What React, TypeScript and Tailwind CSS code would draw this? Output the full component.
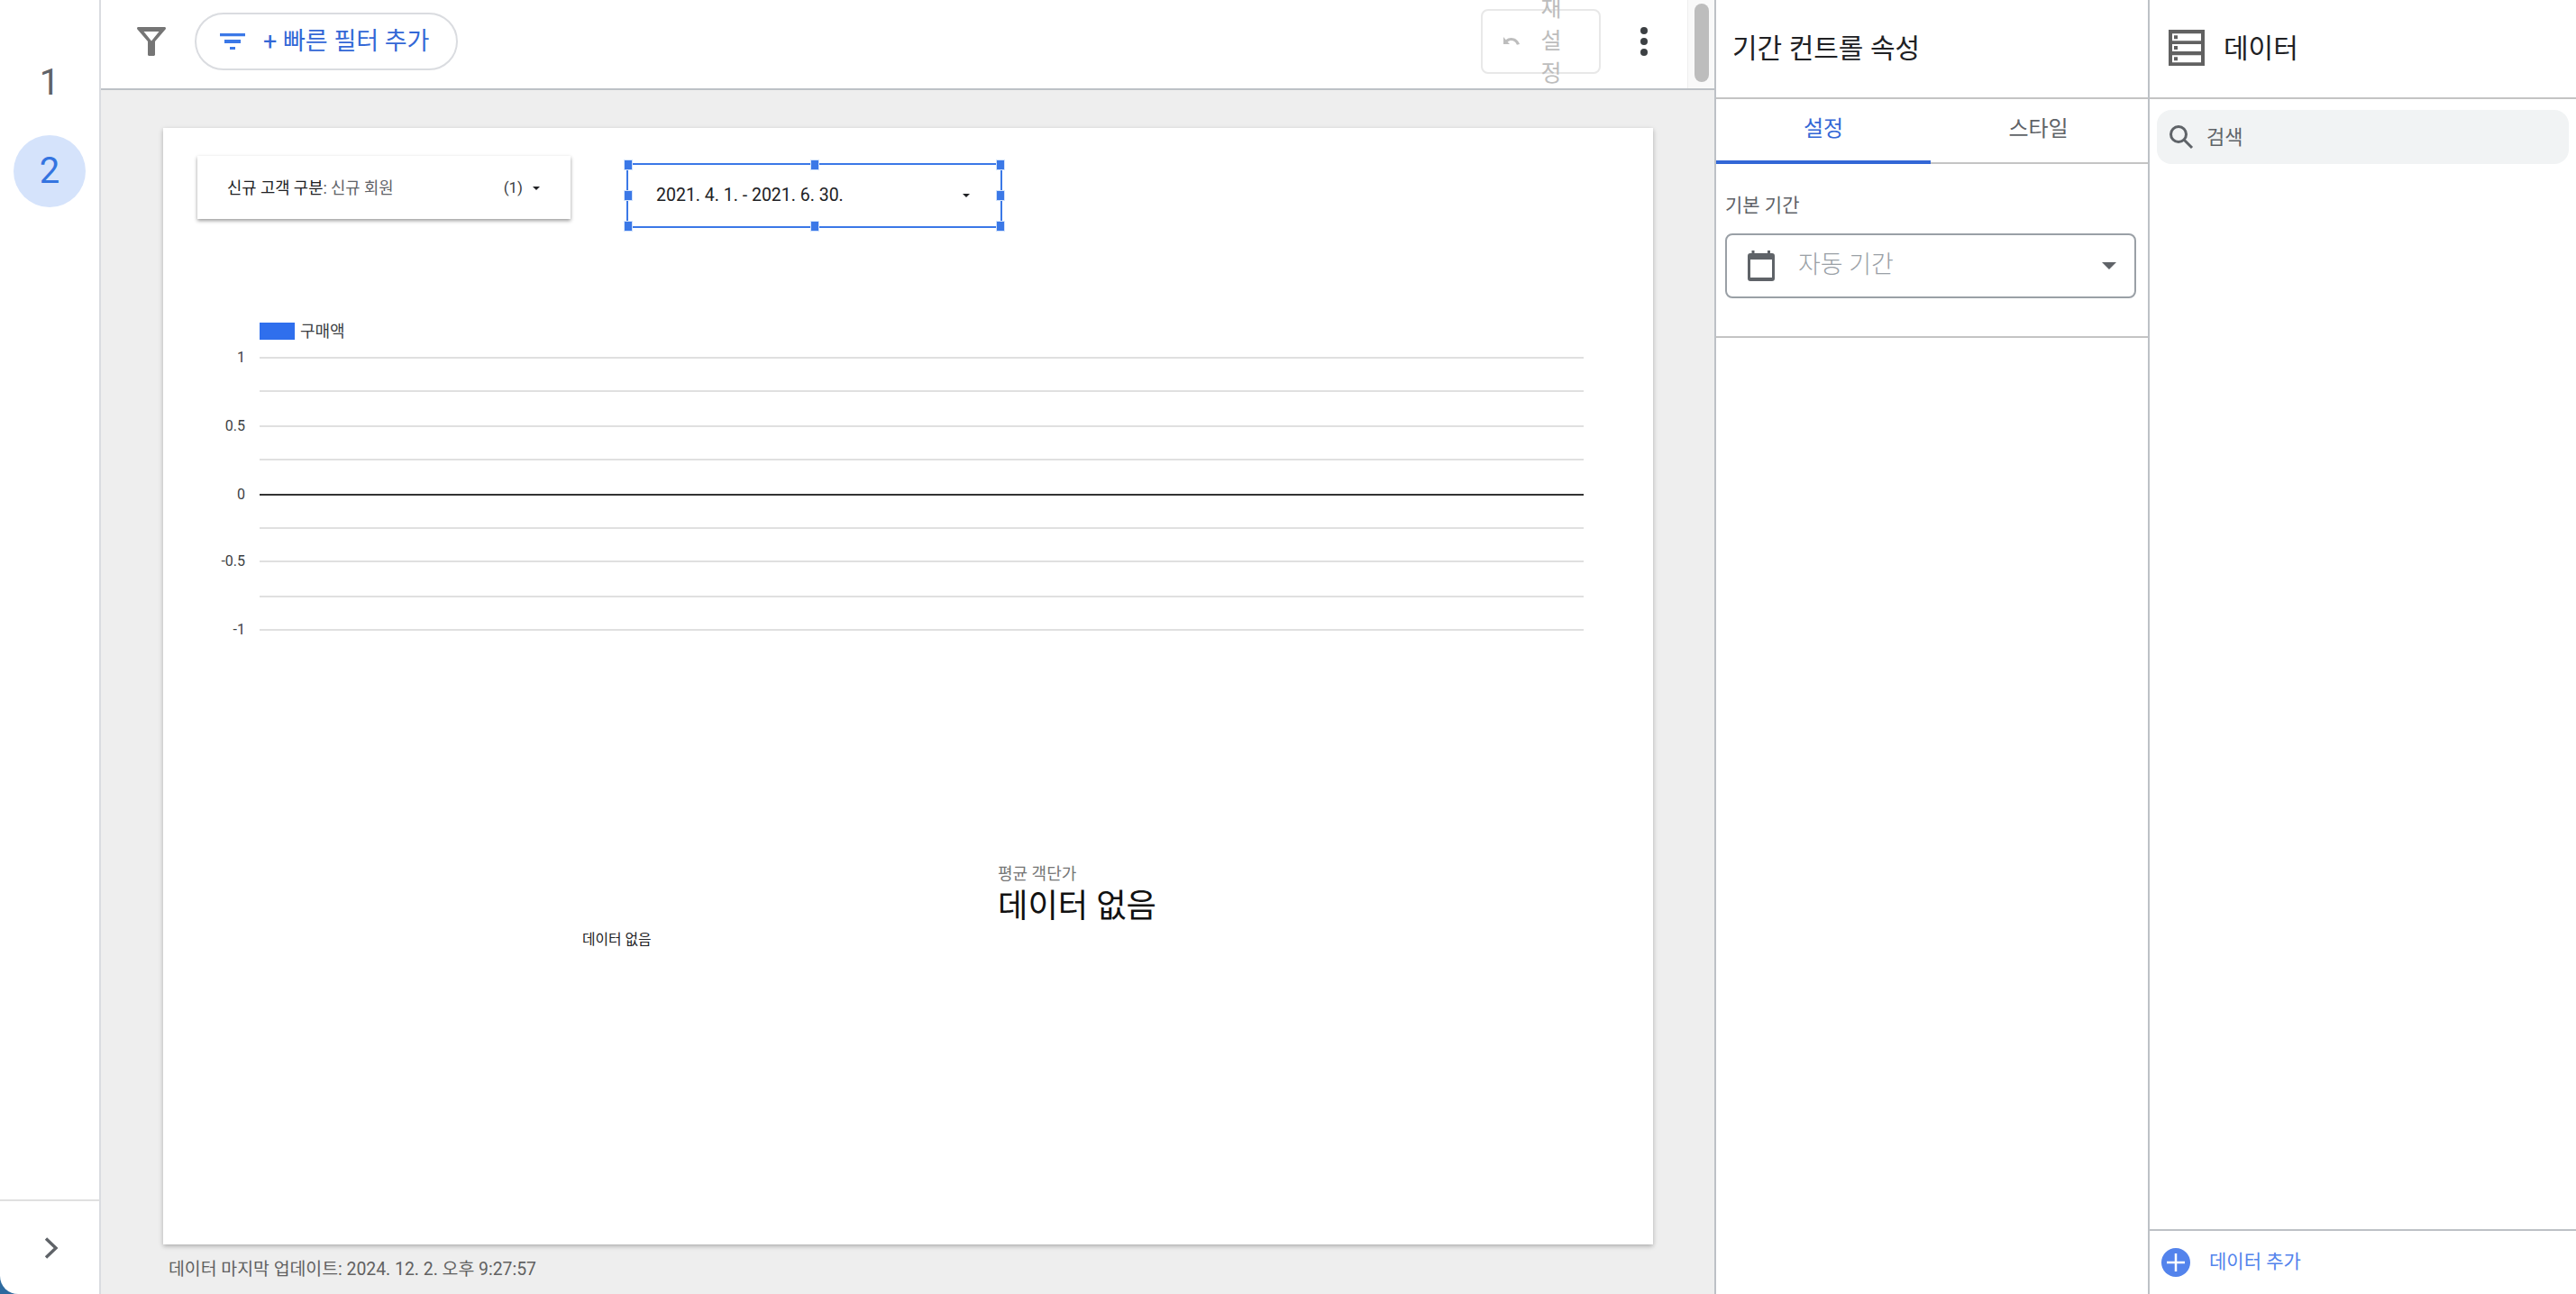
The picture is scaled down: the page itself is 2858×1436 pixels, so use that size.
import React from 'react';

const font = 'font-["Roboto","Noto_Sans_CJK_KR",sans-serif]';
const kr = { fontFamily: 'Roboto, "Noto Sans CJK KR", sans-serif' };

const gridLines = [
  { top: 254, label: '1' },
  { top: 291 },
  { top: 330, label: '0.5' },
  { top: 367 },
  { top: 406, label: '0', dark: true },
  { top: 443 },
  { top: 480, label: '-0.5' },
  { top: 519 },
  { top: 556, label: '-1' },
];

const handles = [
  'left-[-5px] top-[-6px]',
  'left-1/2 -translate-x-1/2 top-[-6px]',
  'right-[-5px] top-[-6px]',
  'left-[-5px] top-1/2 -translate-y-1/2',
  'right-[-5px] top-1/2 -translate-y-1/2',
  'left-[-5px] bottom-[-6px]',
  'left-1/2 -translate-x-1/2 bottom-[-6px]',
  'right-[-5px] bottom-[-6px]',
];

const Caret = ({ className }: { className: string }) => (
  <svg viewBox="0 0 10 5" className={className} fill="currentColor">
    <path d="M0 0h10L5 5z" />
  </svg>
);

const ReportCanvas = () => (
  <div className="relative ml-[69px] mt-[42px] h-[1239px] w-[1653px] bg-white shadow-[0_2px_5px_rgba(0,0,0,0.28)]">
    {/* filter control */}
    <div className="absolute left-[38px] top-[31px] flex h-[70px] w-[414px] items-center justify-between bg-white pl-[33px] pr-[34px] pt-[2px] shadow-[0_2px_4px_rgba(0,0,0,0.4)]">
      <span className="text-[17.7px] text-[#202124]">
        신규 고객 구분<span className="text-[#5f6368]">: 신규 회원</span>
      </span>
      <span className="flex items-center gap-[11px] text-[17px] text-[#3c4043]">
        (1)
        <Caret className="h-[4px] w-[8px] text-[#202124]" />
      </span>
    </div>

    {/* date control, selected */}
    <div className="absolute left-[514px] top-[39px] flex h-[72px] w-[417px] items-center justify-between border-2 border-[#3b78e7] pl-[31px] pr-[34px]">
      <span className="text-[19.5px] text-[#202124]">2021. 4. 1. - 2021. 6. 30.</span>
      <Caret className="h-[4px] w-[8px] text-[#202124]" />
      {handles.map((pos) => (
        <span key={pos} className={`absolute h-[12px] w-[10px] border border-[#d2e3fc] bg-[#3b78e7] ${pos}`} />
      ))}
    </div>

    {/* legend */}
    <div className="absolute left-[107px] top-[216px] flex items-center gap-[6px]">
      <span className="h-[19px] w-[39px] bg-[#2f6fed]" />
      <span className="text-[18px] leading-[19px] text-[#3c4043]">구매액</span>
    </div>

    {/* chart grid */}
    {gridLines.map((line) => (
      <div key={line.top} className="absolute left-[50px] w-[1526px]" style={{ top: line.top }}>
        {line.label && (
          <span className="absolute right-[1485px] top-[-11px] text-[16px] leading-[24px] text-[#3c4043]">{line.label}</span>
        )}
        <div className={`ml-[57px] ${line.dark ? 'h-[2px] bg-[#333333]' : 'h-[2px] bg-[#e0e0e0]'}`} />
      </div>
    ))}

    {/* scorecard */}
    <div className="absolute left-[926px] top-[815px] text-[18px] leading-[26px] text-[#757575]">평균 객단가</div>
    <div className="absolute left-[926px] top-[838px] text-[36.3px] leading-[52px] text-[#111111]">데이터 없음</div>
    <div className="absolute left-[465px] top-[889px] text-[15.8px] leading-[24px] text-[#202124]">데이터 없음</div>
  </div>
);

export default function App() {
  return (
    <div className="h-screen w-screen overflow-hidden bg-[#2d6a9f]" style={kr}>
      <div className={`flex h-full w-full overflow-hidden rounded-bl-[20px] bg-white ${font}`}>
        {/* page rail */}
        <aside className="flex w-[112px] shrink-0 flex-col border-r-2 border-[#dadce0]">
          <div className="flex flex-1 flex-col items-center gap-[18px] pt-[52px]">
            <div className="flex h-[80px] w-[80px] items-center justify-center text-[40px] text-[#5f6368]">1</div>
            <div className="flex h-[80px] w-[80px] items-center justify-center rounded-full bg-[#d5e3fb] text-[40px] text-[#3474e0]">2</div>
          </div>
          <div className="flex h-[105px] items-center justify-center border-t-2 border-[#e0e0e0] pl-[3px]">
            <svg viewBox="0 0 16 24" className="h-[24px] w-[16px]" fill="none" stroke="#5f6368" strokeWidth="3.4">
              <path d="M2 1.5L13 12 2 22.5" />
            </svg>
          </div>
        </aside>

        {/* main area */}
        <main className="flex min-w-0 flex-1 flex-col">
          <header className="flex h-[100px] shrink-0 border-b-2 border-[#bdc1c6]">
            <div className="flex min-w-0 flex-1 items-center pb-[6px] pl-[40px]">
              <svg viewBox="0 0 32 32" className="h-[32px] w-[32px]" fill="#757575">
                <path fillRule="evenodd" d="M1.500 0h29c1.300 0 1.900 1.400 1.100 2.400L20 16v14.500c0 .8-.7 1.500-1.500 1.500h-5c-.8 0-1.500-.7-1.500-1.500V16L.4 2.400C-.4 1.400.2 0 1.500 0zM7.500 5l8.500 10.500L24.500 5z" />
              </svg>
              <button className="ml-[32px] flex h-[64px] w-[292px] items-center rounded-full border-2 border-[#dadce0] pl-[26px] text-[27px] text-[#3367d6]">
                <svg viewBox="0 0 28 18" className="h-[18px] w-[28px]" fill="#3b78e7">
                  <path d="M0 0h28v3.300H0zM5 7h18v4H5zM11 15h6v3h-6z" />
                </svg>
                <span className="ml-[20px] whitespace-nowrap">+ 빠른 필터 추가</span>
              </button>
              <button className="ml-auto flex h-[72px] w-[133px] items-center rounded-[8px] border-2 border-[#e8e8e8] pl-[23px] text-[#bdbdbd]">
                <svg viewBox="0 0 18 10" className="h-[10px] w-[18px] shrink-0" fill="#bdbdbd">
                  <path d="M0 0v8h7L4.600 5.600C5.700 4.700 7 4 8.600 4c2.900 0 5.300 1.700 6.300 4.800L18 8C16.600 3.800 13 1 8.600 1 6.400 1 4.400 1.900 2.800 3.200z" />
                </svg>
                <span className="ml-[22px] w-[26px] text-[25px] leading-[36px]">재 설 정</span>
              </button>
              <div className="ml-[44px] mr-[44px] flex flex-col gap-[4px]">
                <span className="h-[8px] w-[8px] rounded-full bg-[#3c4043]" />
                <span className="h-[8px] w-[8px] rounded-full bg-[#3c4043]" />
                <span className="h-[8px] w-[8px] rounded-full bg-[#3c4043]" />
              </div>
            </div>
            <div className="w-[30px] shrink-0 border-l border-[#eeeeee] bg-[#f9f9f9] px-[7px] pt-[4px]">
              <div className="h-[87px] w-[16px] rounded-full bg-[#bdbdbd]" />
            </div>
          </header>

          <div className="flex-1 overflow-hidden bg-[#eeeeee]">
            <ReportCanvas />
            <p className="ml-[75px] mt-[14px] text-[19.4px] leading-[28px] text-[#616161]">데이터 마지막 업데이트: 2024. 12. 2. 오후 9:27:57</p>
          </div>
        </main>

        {/* properties panel */}
        <section className="flex w-[481px] shrink-0 flex-col border-l-2 border-[#bdc1c6]">
          <div className="flex h-[110px] shrink-0 items-center border-b-2 border-[#c4c4c4] pb-[2px] pl-[18px] text-[30px] text-[#202124]">기간 컨트롤 속성</div>
          <div className="flex h-[72px] shrink-0 border-b-2 border-[#c4c4c4] text-[24px]">
            <div className="relative flex w-[238px] items-center justify-center pb-[4px] text-[#3367d6]">
              설정
              <span className="absolute bottom-[-2px] left-0 h-[4px] w-full bg-[#3367d6]" />
            </div>
            <div className="flex flex-1 items-center justify-center pb-[4px] pr-[2px] text-[#5f6368]">스타일</div>
          </div>
          <div className="h-[193px] shrink-0 border-b-2 border-[#c4c4c4] px-[10px] pt-[31px]">
            <div className="text-[21px] leading-[30px] text-[#5f6368]">기본 기간</div>
            <div className="mt-[16px] flex h-[72px] w-[456px] items-center rounded-[8px] border-2 border-[#9aa0a6] pl-[23px] pr-[20px]">
              <svg viewBox="0 0 30 34" className="h-[34px] w-[30px] shrink-0">
                <path fill="#5f6368" d="M4.500 0h3v3h14.500V0h3v3H27a3 3 0 0 1 3 3v25a3 3 0 0 1-3 3H3a3 3 0 0 1-3-3V6a3 3 0 0 1 3-3h1.500zM3 10v20h24V10z" />
              </svg>
              <span className="mb-[2px] ml-[26px] text-[27px] font-light text-[#9aa0a6]">자동 기간</span>
              <Caret className="ml-auto h-[8px] w-[16px] text-[#5f6368]" />
            </div>
          </div>
        </section>

        {/* data panel */}
        <section className="flex w-[475px] shrink-0 flex-col border-l-2 border-[#bdc1c6]">
          <div className="flex h-[110px] shrink-0 items-center border-b-2 border-[#c4c4c4] pb-[2px] pl-[21px]">
            <svg viewBox="0 0 40 40" className="h-[40px] w-[40px] shrink-0">
              <path fill="#616161" fillRule="evenodd" d="M0 0h40v40H0zM4 4.300v8h32v-8zM4 16v8h32v-8zM4 28.300v8h32v-8z" />
              <path fill="#616161" d="M6 6.300h4v4H6zM6 18h4v4H6zM6 30.300h4v4H6z" />
            </svg>
            <span className="ml-[21px] text-[30px] text-[#202124]">데이터</span>
          </div>
          <div className="px-[8px] pt-[12px]">
            <div className="flex h-[60px] w-[457px] items-center rounded-[16px] bg-[#f1f3f4] pl-[13px]">
              <svg viewBox="0 0 28 28" className="h-[28px] w-[28px] shrink-0" fill="none" stroke="#5f6368" strokeWidth="3">
                <circle cx="11" cy="11" r="8.500" />
                <path d="M17 17l9 9" />
              </svg>
              <span className="ml-[14px] text-[22px] text-[#5f6368]">검색</span>
            </div>
          </div>
          <div className="mt-auto flex h-[72px] shrink-0 items-center border-t-2 border-[#bdc1c6] pl-[13px]">
            <svg viewBox="0 0 32 32" className="h-[32px] w-[32px] shrink-0">
              <circle cx="16" cy="16" r="16" fill="#5383ec" />
              <path d="M6 16h20M16 6v20" stroke="#ffffff" strokeWidth="2.500" />
            </svg>
            <span className="ml-[21px] text-[21px] text-[#5383ec]">데이터 추가</span>
          </div>
        </section>
      </div>
    </div>
  );
}
